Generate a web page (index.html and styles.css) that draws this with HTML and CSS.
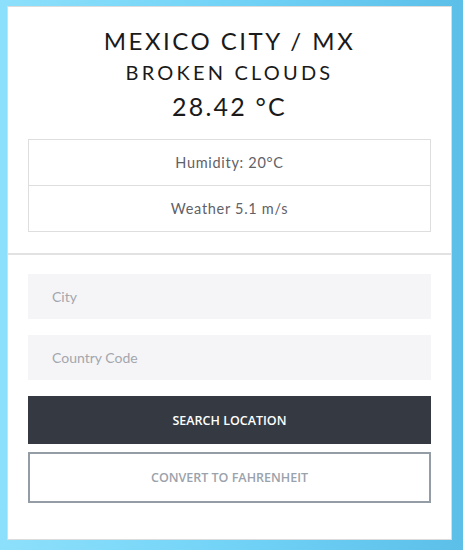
FILE: index.html
```html
<!DOCTYPE html>
<html>
<head>
<meta charset="utf-8">
<link rel="stylesheet" href="styles.css">
</head>
<body>
<div class="card">
  <div class="top">
    <h1 class="city">MEXICO CITY / MX</h1>
    <h2 class="desc">BROKEN CLOUDS</h2>
    <div class="temp">28.42 °C</div>
    <div class="table">
      <div class="row">Humidity: 20°C</div>
      <div class="row">Weather 5.1 m/s</div>
    </div>
  </div>
  <div class="form">
    <div class="input">City</div>
    <div class="input">Country Code</div>
    <button class="btn btn-dark">SEARCH LOCATION</button>
    <button class="btn btn-outline">CONVERT TO FAHRENHEIT</button>
  </div>
</div>
</body>
</html>
```
FILE: styles.css
```css
html, body { margin: 0; height: 100%; }
body {
  background: linear-gradient(90deg, #8de0fb 0%, #72d3f7 50%, #5bbfe8 100%);
  padding: 6px 11px 10px 7px;
  box-sizing: border-box;
  font-family: "Lato", "Open Sans", sans-serif;
}
.card {
  width: 445px;
  height: 534px;
  box-sizing: border-box;
  background: #fff;
  border: 1px solid #dcdcdc;
}
.top {
  padding: 19px 20px 21px;
  border-bottom: 2px solid #e2e2e2;
  text-align: center;
}
.city {
  margin: 0;
  font-size: 24px;
  font-weight: 400;
  letter-spacing: 2.5px;
  line-height: 30px;
  color: #1a1a1a;
}
.desc {
  margin: 0;
  font-size: 20px;
  font-weight: 400;
  letter-spacing: 3.2px;
  line-height: 32px;
  color: #1a1a1a;
}
.temp {
  font-size: 25px;
  letter-spacing: 2.2px;
  line-height: 36px;
  color: #1a1a1a;
  margin-bottom: 15px;
}
.table {
  border: 1px solid #dedede;
}
.row {
  height: 45px;
  display: flex;
  align-items: center;
  justify-content: center;
  font-size: 14.5px;
  letter-spacing: 0.7px;
  color: #5f6168;
}
.row + .row { border-top: 1px solid #dedede; }
.form {
  padding: 19px 20px 0;
  display: flex;
  flex-direction: column;
}
.input {
  height: 45px;
  background: #f5f5f7;
  display: flex;
  align-items: center;
  padding-left: 24px;
  font-size: 14px;
  color: #a3a6ad;
  margin-bottom: 16px;
}
.btn {
  font-family: "Open Sans", "Lato", sans-serif;
  font-size: 12.5px;
  font-weight: 600;
  cursor: pointer;
  width: 100%;
}
.btn-dark {
  height: 48px;
  background: #353a42;
  color: #fff;
  border: none;
  margin-bottom: 8px;
}
.btn-outline {
  height: 51px;
  background: #fff;
  border: 2px solid #949da6;
  color: #9aa2ab;
}
```
